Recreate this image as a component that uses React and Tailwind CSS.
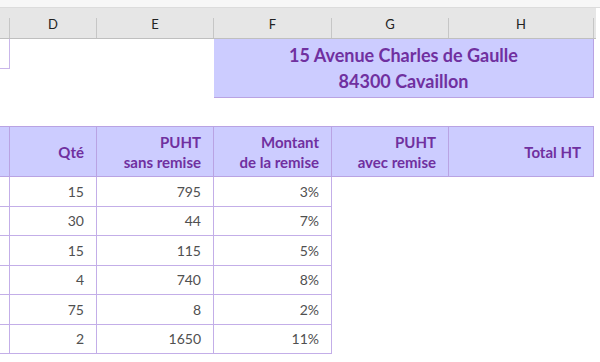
import React from "react";

const cols = ["", "D", "E", "F", "G", "H"];

const rows = [
  [15, 795, "3%"],
  [30, 44, "7%"],
  [15, 115, "5%"],
  [4, 740, "8%"],
  [75, 8, "2%"],
  [2, 1650, "11%"],
];

const widths = ["w-[10px]", "w-[87px]", "w-[117px]", "w-[118px]", "w-[117px]", "w-[145px]"];

const HeaderCell = ({ width, children }) => (
  <div className={`${width} h-[49px] shrink-0 border-r border-[#b9a3e3] flex items-center justify-end ${children ? "pr-3" : ""} text-right leading-[20px]`}>
    {children}
  </div>
);

const App = () => {
  return (
    <div className="w-[600px] h-[362px] overflow-hidden bg-white" style={{ fontFamily: "Lato, 'Liberation Sans', sans-serif" }}>
      {/* top strip */}
      <div className="h-[8px] border-b border-[#dcdcdc] bg-[#f7f7f7]" />

      {/* Column letters */}
      <div className="flex h-[31px] w-[596px] bg-[#e6e6e6] border-b border-[#bfbfbf] text-[13px] text-[#222]">
        {cols.map((c, i) => (
          <div key={i} className={`${widths[i]} shrink-0 flex`}>
            <div className="flex-1 flex items-center justify-center pt-[3px]">{c}</div>
            <div className="w-px h-[20px] self-end bg-[#c6c6c6]" />
          </div>
        ))}
      </div>

      {/* Address rows */}
      <div className="flex h-[87px] items-start">
        <div className="w-[10px] h-[30px] shrink-0 border-r border-b border-[#c9b6ea]" />
        <div className="w-[204px] shrink-0" />
        <div className="w-[380px] h-[59px] shrink-0 bg-[#ccccff] border-r border-b border-[#b9a3e3] flex flex-col items-center justify-center text-[#7030a0] font-bold text-[18px] leading-[26px]">
          <span>15 Avenue Charles de Gaulle</span>
          <span>84300 Cavaillon</span>
        </div>
      </div>

      {/* Table header */}
      <div className="flex w-[594px] bg-[#ccccff] border-y border-[#b9a3e3] text-[#7030a0] font-bold text-[15px]">
        <HeaderCell width={widths[0]} />
        <HeaderCell width={widths[1]}>Qté</HeaderCell>
        <HeaderCell width={widths[2]}>PUHT<br />sans remise</HeaderCell>
        <HeaderCell width={widths[3]}>Montant<br />de la remise</HeaderCell>
        <HeaderCell width={widths[4]}>PUHT<br />avec remise</HeaderCell>
        <HeaderCell width={widths[5]}>Total HT</HeaderCell>
      </div>

      {/* Data rows */}
      <div className="flex flex-col w-[332px] text-[14px] text-[#505050]">
        {rows.map((r, i) => (
          <div key={i} className="flex h-[29.5px] border-b border-[#c3aee8]">
            <div className="w-[10px] shrink-0 border-r border-[#c3aee8]" />
            {r.map((v, j) => (
              <div key={j} className={`${widths[j + 1]} shrink-0 border-r border-[#c3aee8] flex items-center justify-end pr-3`}>
                {v}
              </div>
            ))}
          </div>
        ))}
      </div>
    </div>
  );
};

export default App;
